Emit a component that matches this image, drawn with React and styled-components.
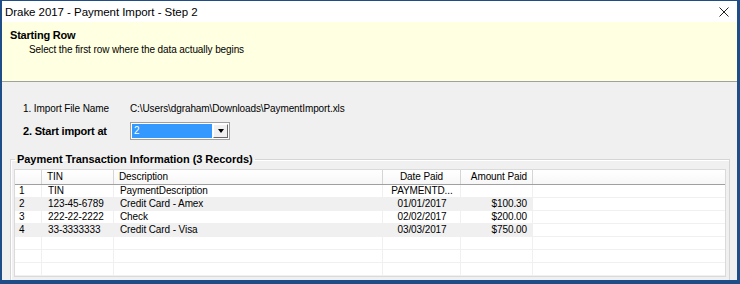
import React from "react";
import styled, { createGlobalStyle } from "styled-components";

const GlobalStyle = createGlobalStyle`
  html, body {
    margin: 0;
    padding: 0;
    overflow: hidden;
    background: #1e4d87;
  }
  body {
    font-family: "Liberation Sans", Arial, sans-serif;
    font-size: 10px;
    letter-spacing: -0.1px;
    color: #000;
  }
  * {
    box-sizing: border-box;
  }
`;

const Window = styled.div`
  width: 740px;
  height: 284px;
  display: flex;
  flex-direction: column;
  border-style: solid;
  border-color: #1e4d87;
  border-width: 1px 3px 4px 2px;
  background: #f0f0f0;
  overflow: hidden;
`;

const TitleBar = styled.div`
  flex: none;
  height: 21px;
  display: flex;
  align-items: center;
  justify-content: space-between;
  padding: 0 8px 0 3px;
  background: #fff;
  font-size: 11.5px;
  letter-spacing: -0.05px;
`;

const CloseIcon = styled.svg`
  width: 10px;
  height: 10px;
  margin-top: 1px;
`;

const Banner = styled.div`
  flex: none;
  height: 60px;
  padding: 7px 8px 0;
  background: #ffffe1;
  border-bottom: 1px solid #a0a0a0;
  line-height: 13px;
`;

const BannerTitle = styled.div`
  font-weight: bold;
  font-size: 11px;
  letter-spacing: -0.2px;
`;

const BannerText = styled.div`
  margin: 1px 0 0 19px;
`;

const Body = styled.div`
  flex: 1;
  min-height: 0;
  padding: 20px 7px 0 8px;
  overflow: hidden;
`;

const FieldGrid = styled.div`
  display: grid;
  grid-template-columns: 107px 1fr;
  row-gap: 6px;
  align-items: center;
  margin-left: 13px;
  line-height: 14px;
`;

const Label = styled.div`
  font-weight: ${(p) => (p.$bold ? "bold" : "normal")};
  font-size: ${(p) => (p.$bold ? "11px" : "10px")};
  letter-spacing: ${(p) => (p.$bold ? "-0.2px" : "-0.1px")};
`;

const Combo = styled.div`
  display: flex;
  width: 100px;
  height: 18px;
  border: 1px solid #a0a0a0;
  background: #fff;
  padding: 1px;
`;

const ComboValue = styled.div`
  flex: 1;
  background: #3399ff;
  color: #fff;
  line-height: 14px;
  padding-left: 2px;
  margin: 0 1px 0 0;
`;

const DropButton = styled.div`
  width: 15px;
  display: flex;
  align-items: center;
  justify-content: center;
  background: #f0f0f0;
  border-style: solid;
  border-width: 1px;
  border-color: #fff #696969 #696969 #fff;

  &::after {
    content: "";
    border-left: 3.5px solid transparent;
    border-right: 3.5px solid transparent;
    border-top: 4px solid #000;
  }
`;

const Group = styled.fieldset`
  margin: 13px 0 0;
  padding: 3px 3px 20px;
  border: 1px solid #d5d5d5;
  box-shadow: inset 1px 1px 0 #fff;
  min-width: 0;
`;

const Legend = styled.legend`
  font-weight: bold;
  font-size: 11px;
  letter-spacing: -0.05px;
  line-height: 13px;
  padding: 0 2px;
  margin-left: 1px;
`;

const ListView = styled.div`
  height: 108px;
  border: 1px solid #dadada;
  background: #fff;
  overflow: hidden;
`;

const COLS = "27px 72px 269px 78px 72px 1fr";

const HeaderRow = styled.div`
  display: grid;
  grid-template-columns: ${COLS};
  height: 15px;
  border-bottom: 1px solid #a0a0a0;
  background: linear-gradient(#ffffff, #f7f7f7);
  line-height: 14px;
`;

const HeaderCell = styled.div`
  padding: 0 5px;
  text-align: ${(p) => p.$align || "left"};
  border-right: ${(p) => (p.$last ? "none" : "1px solid #d5d5d5")};
  white-space: nowrap;
  overflow: hidden;
`;

const Row = styled.div`
  display: grid;
  grid-template-columns: ${COLS};
  height: 13px;
  line-height: 12px;
`;

const Cell = styled.div`
  padding: 0 5px 0 ${(p) => (p.$first ? "4px" : "6px")};
  text-align: ${(p) => p.$align || "left"};
  background: ${(p) => (p.$shade && !p.$last ? "#f0f0f0" : "#fff")};
  border-bottom: 1px solid #f0f0f0;
  border-right: ${(p) => (p.$last ? "none" : "1px solid #f0f0f0")};
  white-space: nowrap;
  overflow: hidden;
`;

const columns = [
  { title: "", align: "left" },
  { title: "TIN", align: "left" },
  { title: "Description", align: "left" },
  { title: "Date Paid", align: "center" },
  { title: "Amount Paid", align: "right" },
];

const records = [
  ["1", "TIN", "PaymentDescription", "PAYMENTD...", ""],
  ["2", "123-45-6789", "Credit Card - Amex", "01/01/2017", "$100.30"],
  ["3", "222-22-2222", "Check", "02/02/2017", "$200.00"],
  ["4", "33-3333333", "Credit Card - Visa", "03/03/2017", "$750.00"],
  ["", "", "", "", ""],
  ["", "", "", "", ""],
  ["", "", "", "", ""],
  ["", "", "", "", ""],
];

const App = () => {
  return (
    <>
      <GlobalStyle />
      <Window>
        <TitleBar>
          <span>Drake 2017 - Payment Import - Step 2</span>
          <CloseIcon viewBox="0 0 10 10">
            <path d="M0.5 0.5 L9.5 9.5 M9.5 0.5 L0.5 9.5" stroke="#222" strokeWidth="1" fill="none" />
          </CloseIcon>
        </TitleBar>
        <Banner>
          <BannerTitle>Starting Row</BannerTitle>
          <BannerText>Select the first row where the data actually begins</BannerText>
        </Banner>
        <Body>
          <FieldGrid>
            <Label>1. Import File Name</Label>
            <div>C:\Users\dgraham\Downloads\PaymentImport.xls</div>
            <Label $bold>2. Start import at</Label>
            <Combo>
              <ComboValue>2</ComboValue>
              <DropButton />
            </Combo>
          </FieldGrid>
          <Group>
            <Legend>Payment Transaction Information (3 Records)</Legend>
            <ListView>
              <HeaderRow>
                {columns.map((c, i) => (
                  <HeaderCell key={i} $align={c.align}>
                    {c.title}
                  </HeaderCell>
                ))}
                <HeaderCell $last />
              </HeaderRow>
              {records.map((r, i) => (
                <Row key={i}>
                  {r.map((v, j) => (
                    <Cell key={j} $first={j === 0} $align={columns[j].align} $shade={i % 2 === 1 && i < 4}>
                      {v}
                    </Cell>
                  ))}
                  <Cell $last />
                </Row>
              ))}
            </ListView>
          </Group>
        </Body>
      </Window>
    </>
  );
};

export default App;
